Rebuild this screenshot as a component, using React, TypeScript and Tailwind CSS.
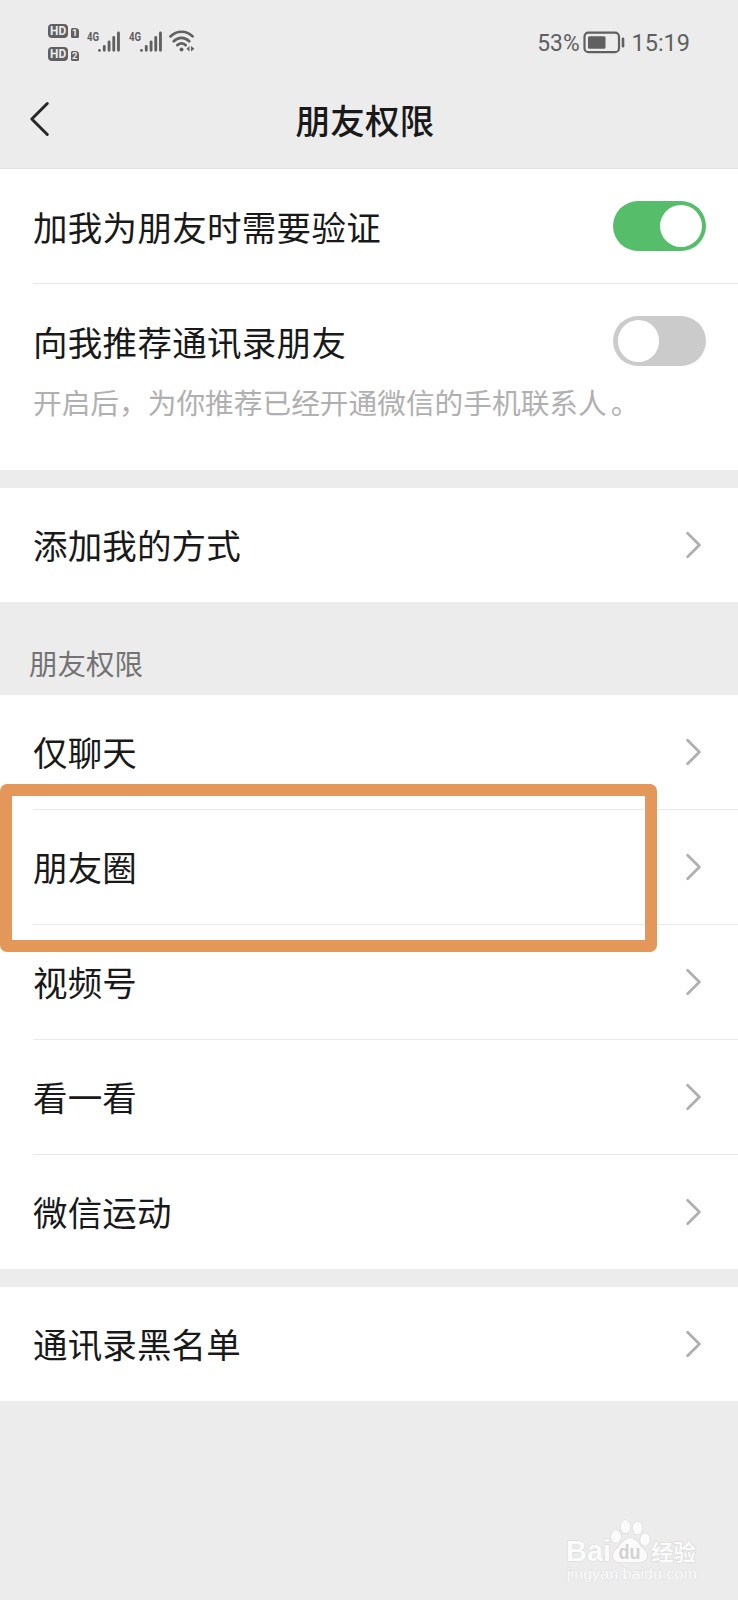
import React from "react";

function HdBadge({ slot }: { slot: string }) {
  return (
    <div className="flex h-[15px] items-end">
      <span className="flex h-[14.5px] w-5 items-center justify-center rounded-[4px] bg-[#606060] text-[13.5px] leading-none font-bold text-[#ececec]">
        <span className="scale-x-[0.88]">HD</span>
      </span>
      <span className="ml-[3px] flex h-[10.5px] w-[7.5px] items-center justify-center rounded-[1.5px] rounded-tr-[3.5px] bg-[#606060] text-[9.5px] leading-none font-bold text-[#ececec]">
        {slot}
      </span>
    </div>
  );
}

function Signal() {
  return (
    <div className="flex w-[35px] items-start">
      <span className="w-[11.5px] origin-left scale-x-[0.74] text-[13px] leading-[12px] font-bold whitespace-nowrap">4G</span>
      <svg width="24" height="22" viewBox="0 0 24 22" fill="none" stroke="#606060" strokeWidth="2.9" strokeLinecap="round">
        <path d="M1.500 19.600V19.500M6.400 19.400V15.600M11.300 19.400V10.800M16.100 19.400V6.200M20.900 19.400V1.800" />
      </svg>
    </div>
  );
}

function Wifi() {
  return (
    <svg width="26" height="23" viewBox="0 0 26 23" fill="none" stroke="#606060" strokeWidth="2.7" strokeLinecap="round">
      <path d="M1.500 6.400C8 .2 17.200 .2 23.600 6.400M4.800 11.200C9.400 6.700 15.600 6.700 20.200 11.200M8.400 15.100C11 12.900 14 12.900 16.600 15.100" />
      <circle cx="12.5" cy="19.4" r="2" fill="#606060" stroke="none" />
      <path d="M20.500 16v5.500L17.500 18.800zM22 16v5.500l3.400-2.700z" fill="#606060" stroke="none" />
    </svg>
  );
}

function StatusBar() {
  return (
    <div className="flex h-[80px] items-start pr-[48px] pl-12 font-['Roboto',sans-serif] text-[#606060]">
      <div className="mt-[23px] flex flex-col gap-[8px]">
        <HdBadge slot="1" />
        <HdBadge slot="2" />
      </div>
      <div className="mt-[31px] ml-[8px] flex">
        <Signal />
        <div className="ml-[7px]">
          <Signal />
        </div>
      </div>
      <div className="mt-[30px] ml-[5px]">
        <Wifi />
      </div>
      <div className="mt-[28px] ml-auto flex h-[29px] items-center text-[23.5px] leading-none">
        <span className="mt-[2px] origin-right scale-x-[0.97]">53%</span>
        <svg className="ml-[4px]" width="43" height="24" viewBox="0 0 43 24" fill="none">
          <rect x="1.5" y="1.7" width="34.5" height="19.5" rx="4" stroke="#606060" strokeWidth="2.2" />
          <rect x="5" y="5.2" width="17.5" height="12.5" rx="1.5" fill="#606060" />
          <path d="M40 7.700v7.600" stroke="#606060" strokeWidth="2.6" strokeLinecap="round" />
        </svg>
        <span className="mt-[2px] ml-[5px]">15:19</span>
      </div>
    </div>
  );
}

function Toggle({ on }: { on?: boolean }) {
  return (
    <span
      role="switch"
      aria-checked={!!on}
      className={`flex h-[50px] w-[93px] items-center rounded-full px-[4.5px] ${on ? "justify-end bg-[#56be6a]" : "justify-start bg-[#cbcbcb]"}`}
    >
      <span className="size-[41.5px] rounded-full bg-white" />
    </span>
  );
}

function Chevron() {
  return (
    <svg width="17" height="28" viewBox="0 0 17 28" fill="none" stroke="#b0b0b0" strokeWidth="2.8" strokeLinecap="round" strokeLinejoin="round">
      <path d="M2.600 2.200L14.400 14 2.600 25.800" />
    </svg>
  );
}

function LinkRow({ label, last }: { label: string; last?: boolean }) {
  return (
    <div className="pl-[33px]">
      <div className={`flex items-center justify-between pr-[36px] ${last ? "h-[114px]" : "h-[115px] border-b border-[#e9e9e9]"}`}>
        <span className="-mt-[2px] text-[34.5px] leading-[50px] tracking-[0.15px]">{label}</span>
        <Chevron />
      </div>
    </div>
  );
}

function Watermark() {
  return (
    <svg
      className="absolute top-[1515px] left-[560px] font-['Liberation_Sans','Noto_Sans_CJK_SC',sans-serif]"
      width="145"
      height="70"
      viewBox="0 0 145 70"
      fill="#fbfbfb"
      stroke="#d9d9d9"
      strokeWidth="1.2"
      paintOrder="stroke"
    >
      <text x="6" y="46" fontSize="29" fontWeight="700" textLength="45" lengthAdjust="spacingAndGlyphs">Bai</text>
      <ellipse cx="56" cy="21.5" rx="5" ry="6.5" />
      <ellipse cx="65.5" cy="11.8" rx="5" ry="6.8" />
      <ellipse cx="77.5" cy="13" rx="5" ry="6.5" />
      <ellipse cx="85" cy="24.5" rx="4.8" ry="6.2" />
      <path d="M70 23C63 23 61 30 56 34.500C50 40 53 48 61 47.500C67 47 73 47 79 47.500C87 48 90 40 84 34.500C79 30 77 23 70 23Z" />
      <text x="58.5" y="44" fontSize="21" fontWeight="700" fill="#d2d2d2" stroke="none" textLength="22" lengthAdjust="spacingAndGlyphs">du</text>
      <text x="91" y="45" fontSize="22" fontWeight="700" textLength="45" lengthAdjust="spacingAndGlyphs">经验</text>
      <text x="7" y="64" fontSize="14" stroke="#e0e0e0" strokeWidth=".8" textLength="130" lengthAdjust="spacingAndGlyphs">jingyan.baidu.com</text>
    </svg>
  );
}

export default function App() {
  return (
    <div className="relative h-[1600px] w-[738px] overflow-hidden bg-[#ececec] font-['Noto_Sans_CJK_SC',sans-serif] text-[#191919]">
      <header className="h-[169px] border-b border-[#e4e4e4]">
        <StatusBar />
        <div className="grid h-[80px] grid-cols-[1fr_auto_1fr] items-center">
          <svg className="-mt-[3px] ml-[29px]" width="21" height="36" viewBox="0 0 21 36" fill="none" stroke="#292929" strokeWidth="3" strokeLinecap="round" strokeLinejoin="round">
            <path d="M18.300 2.500L2.800 18l15.500 15.500" />
          </svg>
          <h1 className="-mt-[3px] mr-[8px] text-[34.5px] leading-[50px] font-medium tracking-[0.2px]">朋友权限</h1>
        </div>
      </header>

      <section className="bg-white pl-[33px]">
        <div className="flex h-[115px] items-center justify-between border-b border-[#e6e6e6] pr-[32px]">
          <span className="-mt-[1px] text-[34.5px] leading-[50px] tracking-[0.3px]">加我为朋友时需要验证</span>
          <Toggle on />
        </div>
        <div className="h-[186px] pt-[32px]">
          <div className="flex h-[50px] items-center justify-between pr-[32px]">
            <span className="-mt-[1px] text-[34.5px] leading-[50px] tracking-[0.3px]">向我推荐通讯录朋友</span>
            <Toggle />
          </div>
          <p className="mt-[16px] text-[28.7px] leading-[40px] text-[#b0b0b0]">
            开启后，为你推荐已经开通微信的手机联系人<span className="pl-1">。</span>
          </p>
        </div>
      </section>

      <section className="mt-[18px] bg-white">
        <LinkRow label="添加我的方式" last />
      </section>

      <h2 className="flex h-[93px] items-end pb-[11px] pl-[29px] text-[28.5px] leading-[42px] text-[#737373]">朋友权限</h2>

      <section className="bg-white">
        <LinkRow label="仅聊天" />
        <LinkRow label="朋友圈" />
        <LinkRow label="视频号" />
        <LinkRow label="看一看" />
        <LinkRow label="微信运动" last />
      </section>

      <section className="mt-[18px] bg-white">
        <LinkRow label="通讯录黑名单" last />
      </section>

      <div className="absolute top-[784px] left-0 h-[168px] w-[657px] rounded-[7px] border-12 border-[#e39758]" />
      <Watermark />
    </div>
  );
}
